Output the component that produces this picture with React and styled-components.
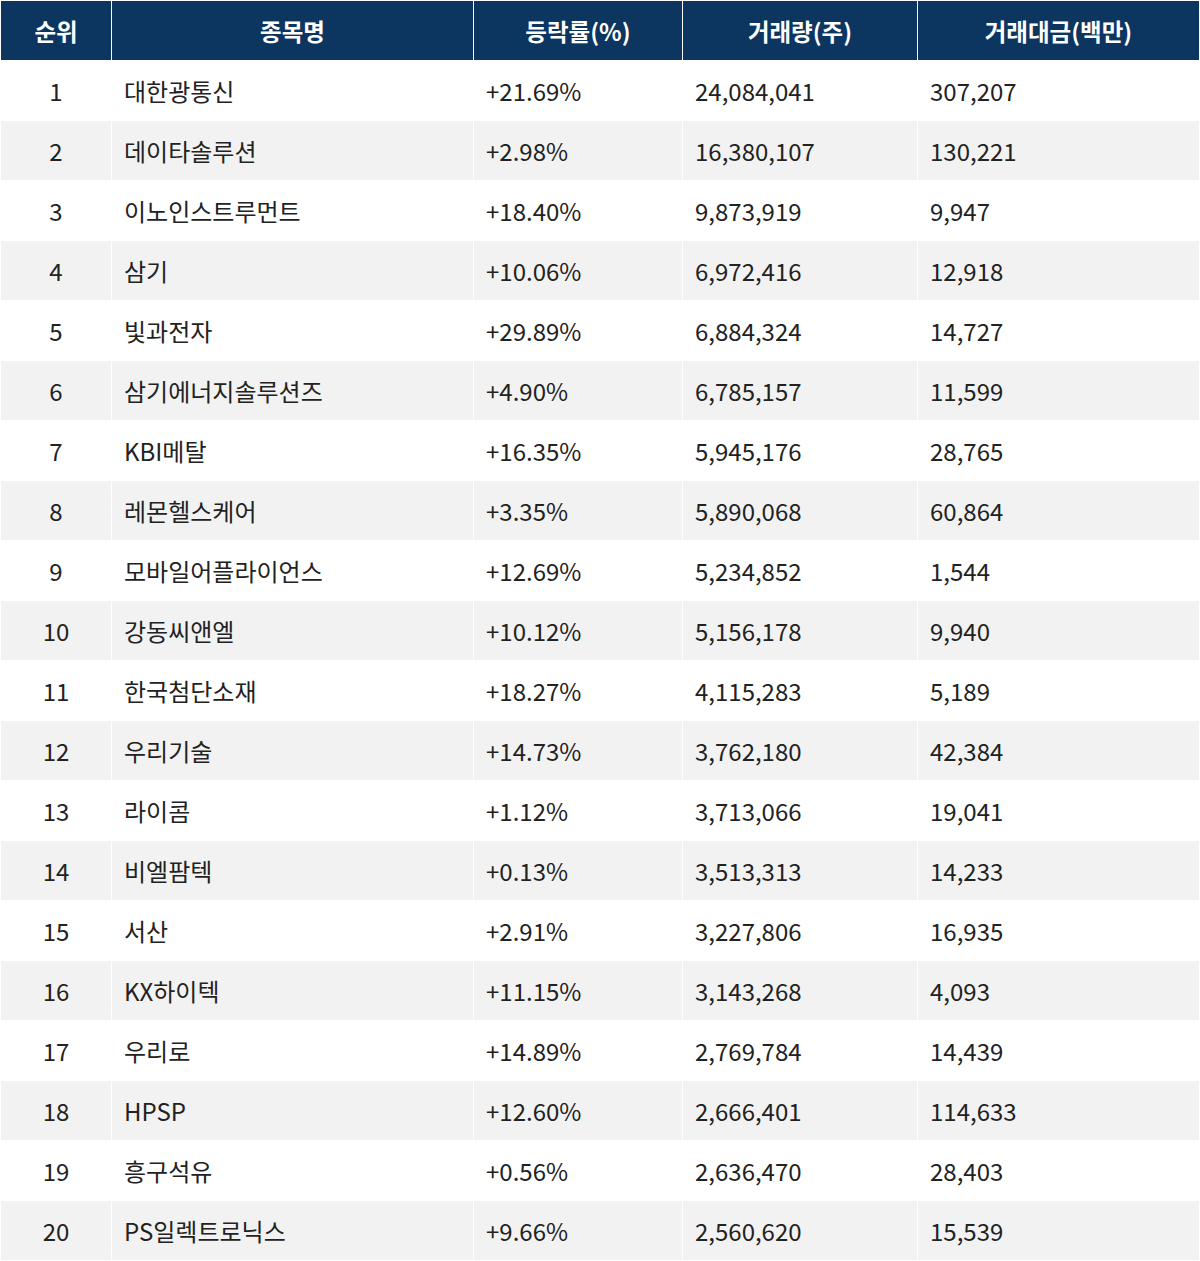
import React from 'react';
import styled, { createGlobalStyle } from 'styled-components';

const GlobalStyle = createGlobalStyle`
  html, body {
    margin: 0;
    padding: 0;
    background: #ffffff;
  }
  body {
    font-family: "Noto Sans CJK KR", "Noto Sans", sans-serif;
  }
`;

const Table = styled.div`
  display: grid;
  grid-template-columns: 110px 361px 208px 234px 1fr;
  grid-auto-rows: 59px;
  gap: 1px;
  padding: 1px;
  width: 1200px;
  box-sizing: border-box;
  background: #ffffff;
`;

const HeadCell = styled.div`
  display: flex;
  align-items: center;
  justify-content: center;
  background: #0c3560;
  color: #ffffff;
  font-size: 23.5px;
  font-weight: 700;
`;

const Cell = styled.div`
  display: flex;
  align-items: center;
  justify-content: ${(p) => (p.$center ? 'center' : 'flex-start')};
  padding-left: ${(p) => (p.$center ? '0' : '12px')};
  background: ${(p) => (p.$alt ? '#f2f2f2' : '#ffffff')};
  color: #222222;
  font-size: 24px;
`;

const headers = ['순위', '종목명', '등락률(%)', '거래량(주)', '거래대금(백만)'];

const rows = [
  ['대한광통신', '+21.69%', '24,084,041', '307,207'],
  ['데이타솔루션', '+2.98%', '16,380,107', '130,221'],
  ['이노인스트루먼트', '+18.40%', '9,873,919', '9,947'],
  ['삼기', '+10.06%', '6,972,416', '12,918'],
  ['빛과전자', '+29.89%', '6,884,324', '14,727'],
  ['삼기에너지솔루션즈', '+4.90%', '6,785,157', '11,599'],
  ['KBI메탈', '+16.35%', '5,945,176', '28,765'],
  ['레몬헬스케어', '+3.35%', '5,890,068', '60,864'],
  ['모바일어플라이언스', '+12.69%', '5,234,852', '1,544'],
  ['강동씨앤엘', '+10.12%', '5,156,178', '9,940'],
  ['한국첨단소재', '+18.27%', '4,115,283', '5,189'],
  ['우리기술', '+14.73%', '3,762,180', '42,384'],
  ['라이콤', '+1.12%', '3,713,066', '19,041'],
  ['비엘팜텍', '+0.13%', '3,513,313', '14,233'],
  ['서산', '+2.91%', '3,227,806', '16,935'],
  ['KX하이텍', '+11.15%', '3,143,268', '4,093'],
  ['우리로', '+14.89%', '2,769,784', '14,439'],
  ['HPSP', '+12.60%', '2,666,401', '114,633'],
  ['흥구석유', '+0.56%', '2,636,470', '28,403'],
  ['PS일렉트로닉스', '+9.66%', '2,560,620', '15,539'],
];

export default function App() {
  return (
    <>
      <GlobalStyle />
      <Table>
        {headers.map((h) => (
          <HeadCell key={h}>{h}</HeadCell>
        ))}
        {rows.map((r, i) => {
          const alt = i % 2 === 1;
          return (
            <React.Fragment key={r[0]}>
              <Cell $center $alt={alt}>{i + 1}</Cell>
              {r.map((v, j) => (
                <Cell key={j} $alt={alt}>{v}</Cell>
              ))}
            </React.Fragment>
          );
        })}
      </Table>
    </>
  );
}
